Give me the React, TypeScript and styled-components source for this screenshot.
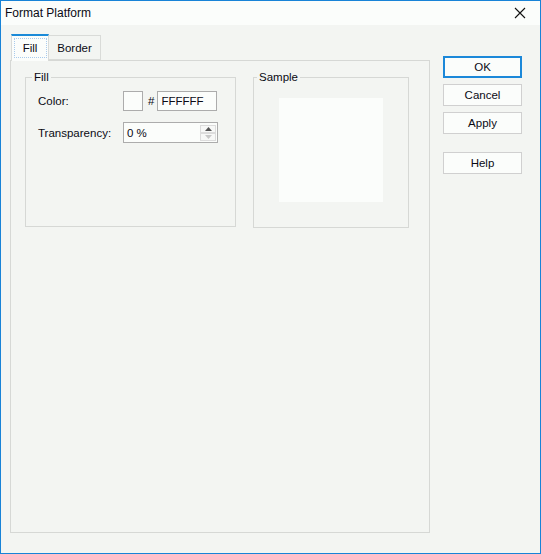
import React from 'react';
import styled, { createGlobalStyle } from "styled-components";

const GlobalStyle = createGlobalStyle`
    html, body {
        margin: 0;
        padding: 0;
        background: #f3f5f2;
    }
    body {
        font-family: "Liberation Sans", Arial, sans-serif;
        font-size: 11.5px;
        color: #0a0a14;
    }
`

const Window = styled.div`
    width: 541px;
    height: 554px;
    box-sizing: border-box;
    border: 1px solid #1883d7;
    background: #f3f5f2;
    display: flex;
    flex-direction: column;
`

const TitleBar = styled.div`
    height: 24px;
    background: #fbfdfb;
    display: flex;
    align-items: center;
    justify-content: space-between;
    padding: 0 14px 0 4px;
    font-size: 12px;
`

const CloseIcon = () => (
    <svg width="12" height="12" viewBox="0 0 12 12">
        <path d="M1 1 L11 11 M11 1 L1 11" stroke="#111" strokeWidth="1.1" fill="none"/>
    </svg>
)

const Body = styled.div`
    flex: 1;
    display: flex;
    padding: 9px 0 0 9px;
`

const TabControl = styled.div`
    width: 420px;
    display: flex;
    flex-direction: column;
`

const TabStrip = styled.div`
    height: 26px;
    display: flex;
    align-items: flex-end;
    padding-left: 1px;
`

const Tab = styled.div<{ active?: boolean; w: number }>`
    box-sizing: border-box;
    width: ${p => p.w}px;
    height: ${p => p.active ? '27px' : '25px'};
    margin-bottom: ${p => p.active ? '-1px' : '0'};
    display: flex;
    align-items: center;
    justify-content: center;
    background: ${p => p.active ? '#fbfdfb' : '#f3f5f2'};
    border: 1px solid #d9dbd8;
    border-top: ${p => p.active ? '2px solid #1a8ad8' : '1px solid #d9dbd8'};
    border-bottom: ${p => p.active ? 'none' : '1px solid #d9dbd8'};
    border-left: ${p => p.active ? '1px solid #d9dbd8' : 'none'};
    position: relative;
    z-index: ${p => p.active ? 1 : 0};
`

const FocusLabel = styled.span`
    box-sizing: border-box;
    width: 31px;
    height: 18px;
    display: flex;
    align-items: center;
    justify-content: center;
    margin-top: -1px;
    outline: 1px dotted #a9cbec;
`

const Panel = styled.div`
    height: 473px;
    box-sizing: border-box;
    border: 1px solid #d6d8d5;
    display: flex;
    align-items: flex-start;
    gap: 17px;
    padding: 9px 0 0 14px;
`

const Group = styled.fieldset<{ w: number; h: number }>`
    margin: 0;
    padding: 0;
    width: ${p => p.w}px;
    height: ${p => p.h}px;
    box-sizing: border-box;
    border: 1px solid #d6d8d5;
    min-width: 0;
`

const Legend = styled.legend<{ offset: number }>`
    margin-left: ${p => p.offset}px;
    padding: 0 2px;
    line-height: 14px;
`

const FieldGrid = styled.div`
    display: grid;
    grid-template-columns: 85px auto;
    row-gap: 11px;
    padding: 7px 0 0 12px;
    align-items: center;
`

const Label = styled.span``

const Inline = styled.div`
    display: flex;
    align-items: center;
`

const Swatch = styled.div<{ color: string }>`
    width: 20px;
    height: 20px;
    box-sizing: border-box;
    border: 1px solid #acacac;
    background: ${p => p.color};
`

const Hash = styled.span`
    margin: 0 3px 0 5px;
`

const TextBox = styled.div<{ w: number; h: number }>`
    width: ${p => p.w}px;
    height: ${p => p.h}px;
    box-sizing: border-box;
    border: 1px solid #acacac;
    background: #fbfdfb;
    display: flex;
    align-items: center;
    padding-left: 3px;
`

const SpinButtons = styled.div`
    margin-left: auto;
    margin-right: 1px;
    display: flex;
    flex-direction: column;
`

const SpinButton = styled.div`
    width: 16px;
    height: 8px;
    box-sizing: border-box;
    border: 1px solid #dcdcdc;
    display: flex;
    align-items: center;
    justify-content: center;
    background: #f7f8f7;
`

const Arrow = ({ up, color }: { up?: boolean; color: string }) => (
    <svg width="7" height="4" viewBox="0 0 7 4">
        <path d={up ? "M0 4 L3.5 0 L7 4 Z" : "M0 0 L7 0 L3.5 4 Z"} fill={color}/>
    </svg>
)

const SampleArea = styled.div`
    display: flex;
    justify-content: center;
    padding-top: 14px;
`

const SampleBox = styled.div`
    width: 104px;
    height: 104px;
    background: #fbfdfb;
    margin-right: 1px;
`

const ButtonColumn = styled.div`
    display: flex;
    flex-direction: column;
    gap: 6px;
    margin: 22px 0 0 13px;
`

const Button = styled.div<{ primary?: boolean; spaced?: boolean }>`
    width: 79px;
    height: 22px;
    box-sizing: border-box;
    border: ${p => p.primary ? '2px solid #1b88d9' : '1px solid #d0d0d0'};
    background: #fbfdfb;
    display: flex;
    align-items: center;
    justify-content: center;
    margin-top: ${p => p.spaced ? '12px' : '0'};
`

export default function App() {
    return (
        <>
            <GlobalStyle/>
            <Window>
                <TitleBar>
                    <span>Format Platform</span>
                    <CloseIcon/>
                </TitleBar>
                <Body>
                    <TabControl>
                        <TabStrip>
                            <Tab active w={38}><FocusLabel>Fill</FocusLabel></Tab>
                            <Tab w={52}>Border</Tab>
                        </TabStrip>
                        <Panel>
                            <Group w={211} h={157}>
                                <Legend offset={6}>Fill</Legend>
                                <FieldGrid>
                                    <Label>Color:</Label>
                                    <Inline>
                                        <Swatch color="#fbfdfb"/>
                                        <Hash>#</Hash>
                                        <TextBox w={60} h={20}>FFFFFF</TextBox>
                                    </Inline>
                                    <Label>Transparency:</Label>
                                    <TextBox w={95} h={21}>
                                        0 %
                                        <SpinButtons>
                                            <SpinButton><Arrow up color="#555"/></SpinButton>
                                            <SpinButton><Arrow color="#c8c8c8"/></SpinButton>
                                        </SpinButtons>
                                    </TextBox>
                                </FieldGrid>
                            </Group>
                            <Group w={156} h={158}>
                                <Legend offset={3}>Sample</Legend>
                                <SampleArea>
                                    <SampleBox/>
                                </SampleArea>
                            </Group>
                        </Panel>
                    </TabControl>
                    <ButtonColumn>
                        <Button primary>OK</Button>
                        <Button>Cancel</Button>
                        <Button>Apply</Button>
                        <Button spaced>Help</Button>
                    </ButtonColumn>
                </Body>
            </Window>
        </>
    );
}
